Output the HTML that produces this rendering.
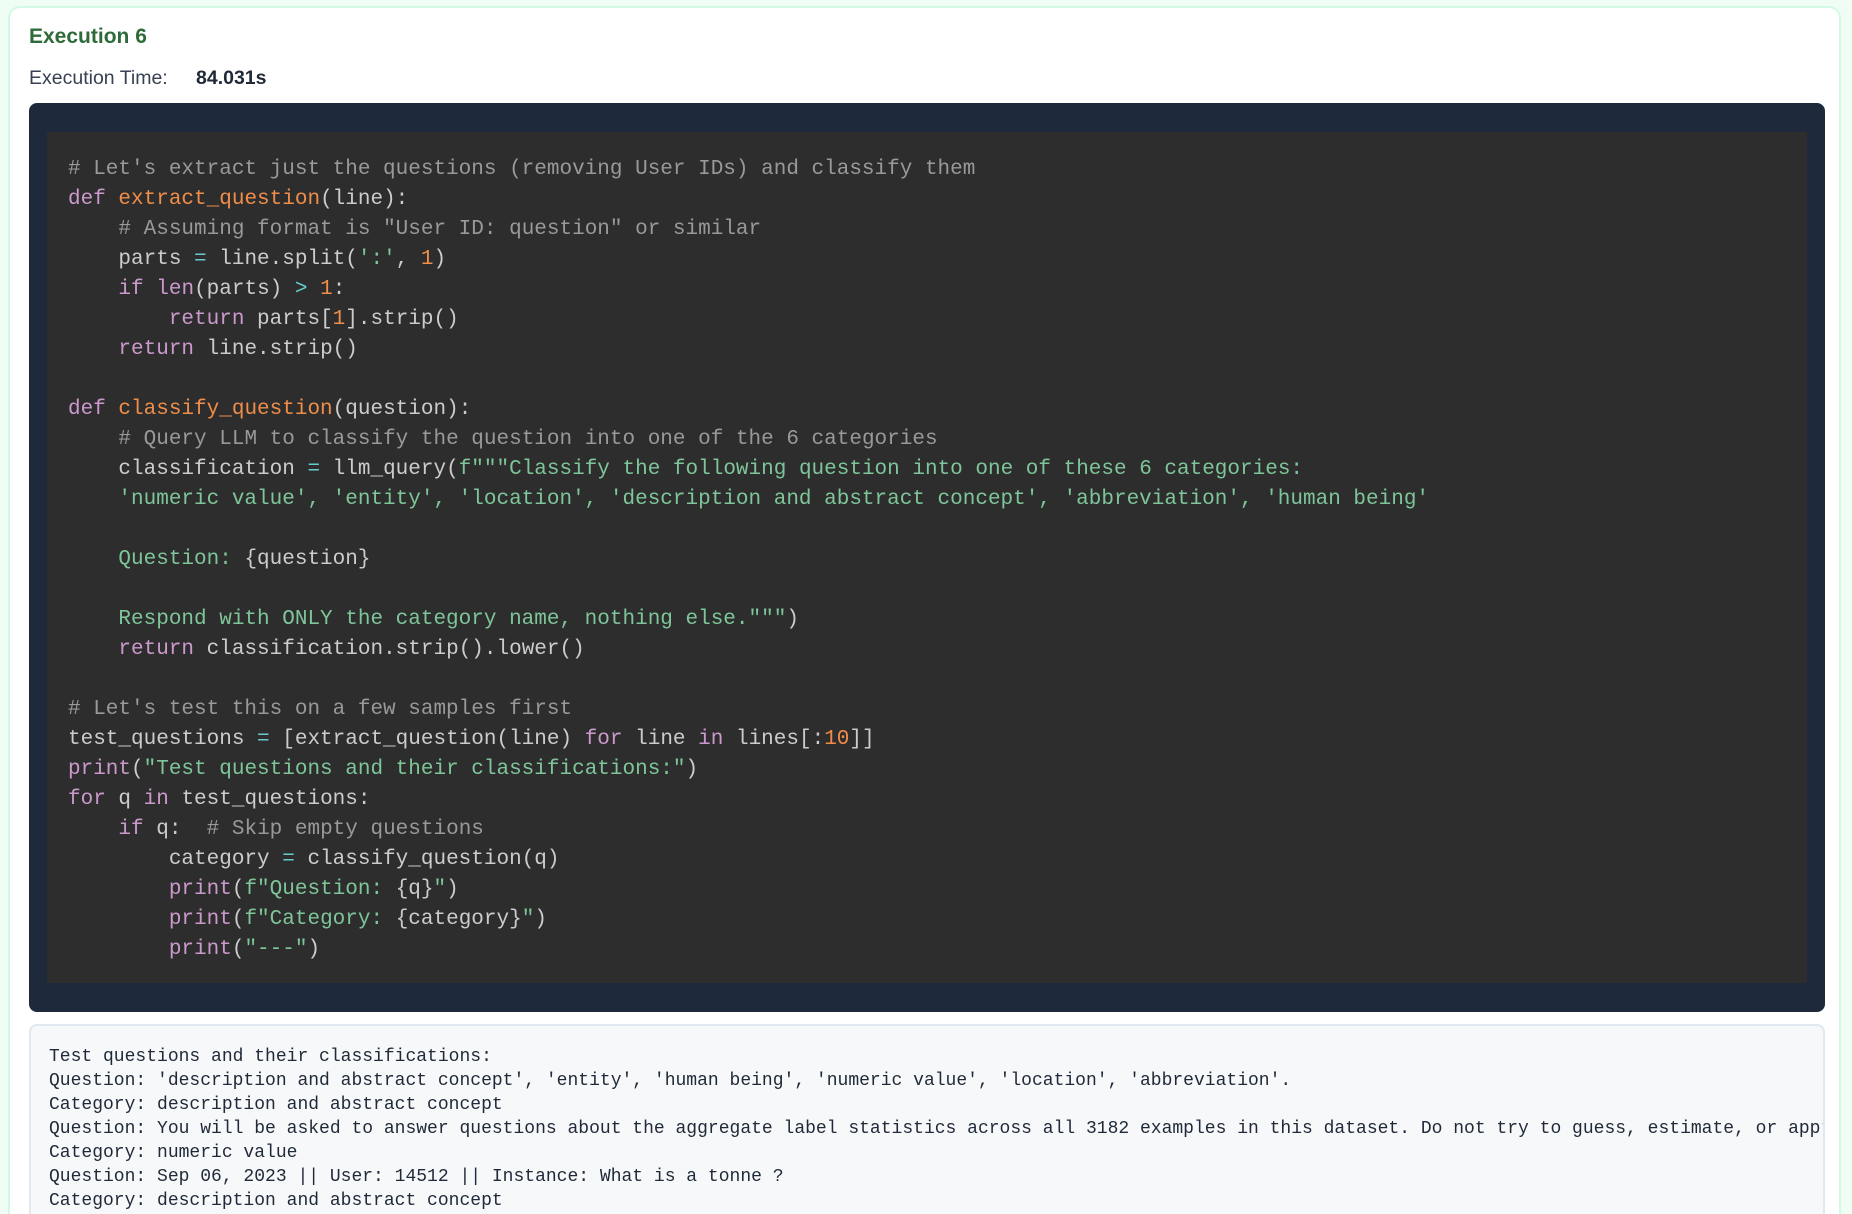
<!DOCTYPE html>
<html><head><meta charset="utf-8"><style>
html,body{margin:0;padding:0;width:1852px;height:1214px;overflow:hidden;background:#f0fdf4;font-family:"Liberation Sans",sans-serif;}
.card{position:absolute;left:8px;top:6px;width:1833px;height:1208px;background:#fff;border:2px solid #d1fae5;border-bottom:none;border-radius:12px 12px 0 0;box-sizing:border-box;}
.title{position:absolute;left:29px;top:25px;font-size:21px;font-weight:bold;color:#2f6b3a;}
.et{position:absolute;left:29px;top:67px;font-size:19.5px;color:#374151;}
.et b{position:absolute;left:167px;top:0;color:#1f2937;white-space:nowrap;}
.dark{position:absolute;left:29px;top:103px;width:1796px;height:909px;background:#1e293b;border-radius:8px;}
.code{position:absolute;left:47px;top:132px;width:1760px;height:851px;background:#2d2d2d;}
pre{margin:0;font-family:"Liberation Mono","DejaVu Sans Mono",monospace;}
.code pre{position:absolute;left:21px;top:23px;font-size:21px;line-height:30px;color:#ccc;}
.c{color:#999}.k{color:#cc99cd}.f{color:#f08d49}.s{color:#7ec699}.n{color:#f08d49}.o{color:#67cdcc}
.out{position:absolute;left:29px;top:1024px;width:1796px;height:190px;background:#f7f8fa;border:2px solid #e2e8f0;border-bottom:none;border-radius:8px 8px 0 0;box-sizing:border-box;overflow:hidden;}
.out pre{position:absolute;left:18px;top:19px;font-size:18px;line-height:24px;color:#1f2937;white-space:pre;}
</style></head><body>
<div class="card"></div>
<div class="title">Execution 6</div>
<div class="et">Execution Time:<b>84.031s</b></div>
<div class="dark"></div>
<div class="code"><pre><span class="c"># Let's extract just the questions (removing User IDs) and classify them</span>
<span class="k">def</span> <span class="f">extract_question</span>(line):
    <span class="c"># Assuming format is "User ID: question" or similar</span>
    parts <span class="o">=</span> line.split(<span class="s">':'</span>, <span class="n">1</span>)
    <span class="k">if</span> <span class="k">len</span>(parts) <span class="o">&gt;</span> <span class="n">1</span>:
        <span class="k">return</span> parts[<span class="n">1</span>].strip()
    <span class="k">return</span> line.strip()

<span class="k">def</span> <span class="f">classify_question</span>(question):
    <span class="c"># Query LLM to classify the question into one of the 6 categories</span>
    classification <span class="o">=</span> llm_query(<span class="s">f"""Classify the following question into one of these 6 categories:
    'numeric value', 'entity', 'location', 'description and abstract concept', 'abbreviation', 'human being'

    Question: </span>{question}<span class="s">

    Respond with ONLY the category name, nothing else."""</span>)
    <span class="k">return</span> classification.strip().lower()

<span class="c"># Let's test this on a few samples first</span>
test_questions <span class="o">=</span> [extract_question(line) <span class="k">for</span> line <span class="k">in</span> lines[:<span class="n">10</span>]]
<span class="k">print</span>(<span class="s">"Test questions and their classifications:"</span>)
<span class="k">for</span> q <span class="k">in</span> test_questions:
    <span class="k">if</span> q:  <span class="c"># Skip empty questions</span>
        category <span class="o">=</span> classify_question(q)
        <span class="k">print</span>(<span class="s">f"Question: </span>{q}<span class="s">"</span>)
        <span class="k">print</span>(<span class="s">f"Category: </span>{category}<span class="s">"</span>)
        <span class="k">print</span>(<span class="s">"---"</span>)</pre></div>
<div class="out"><pre>Test questions and their classifications:
Question: 'description and abstract concept', 'entity', 'human being', 'numeric value', 'location', 'abbreviation'.
Category: description and abstract concept
Question: You will be asked to answer questions about the aggregate label statistics across all 3182 examples in this dataset. Do not try to guess, estimate, or approximate
Category: numeric value
Question: Sep 06, 2023 || User: 14512 || Instance: What is a tonne ?
Category: description and abstract concept</pre></div>
</body></html>
